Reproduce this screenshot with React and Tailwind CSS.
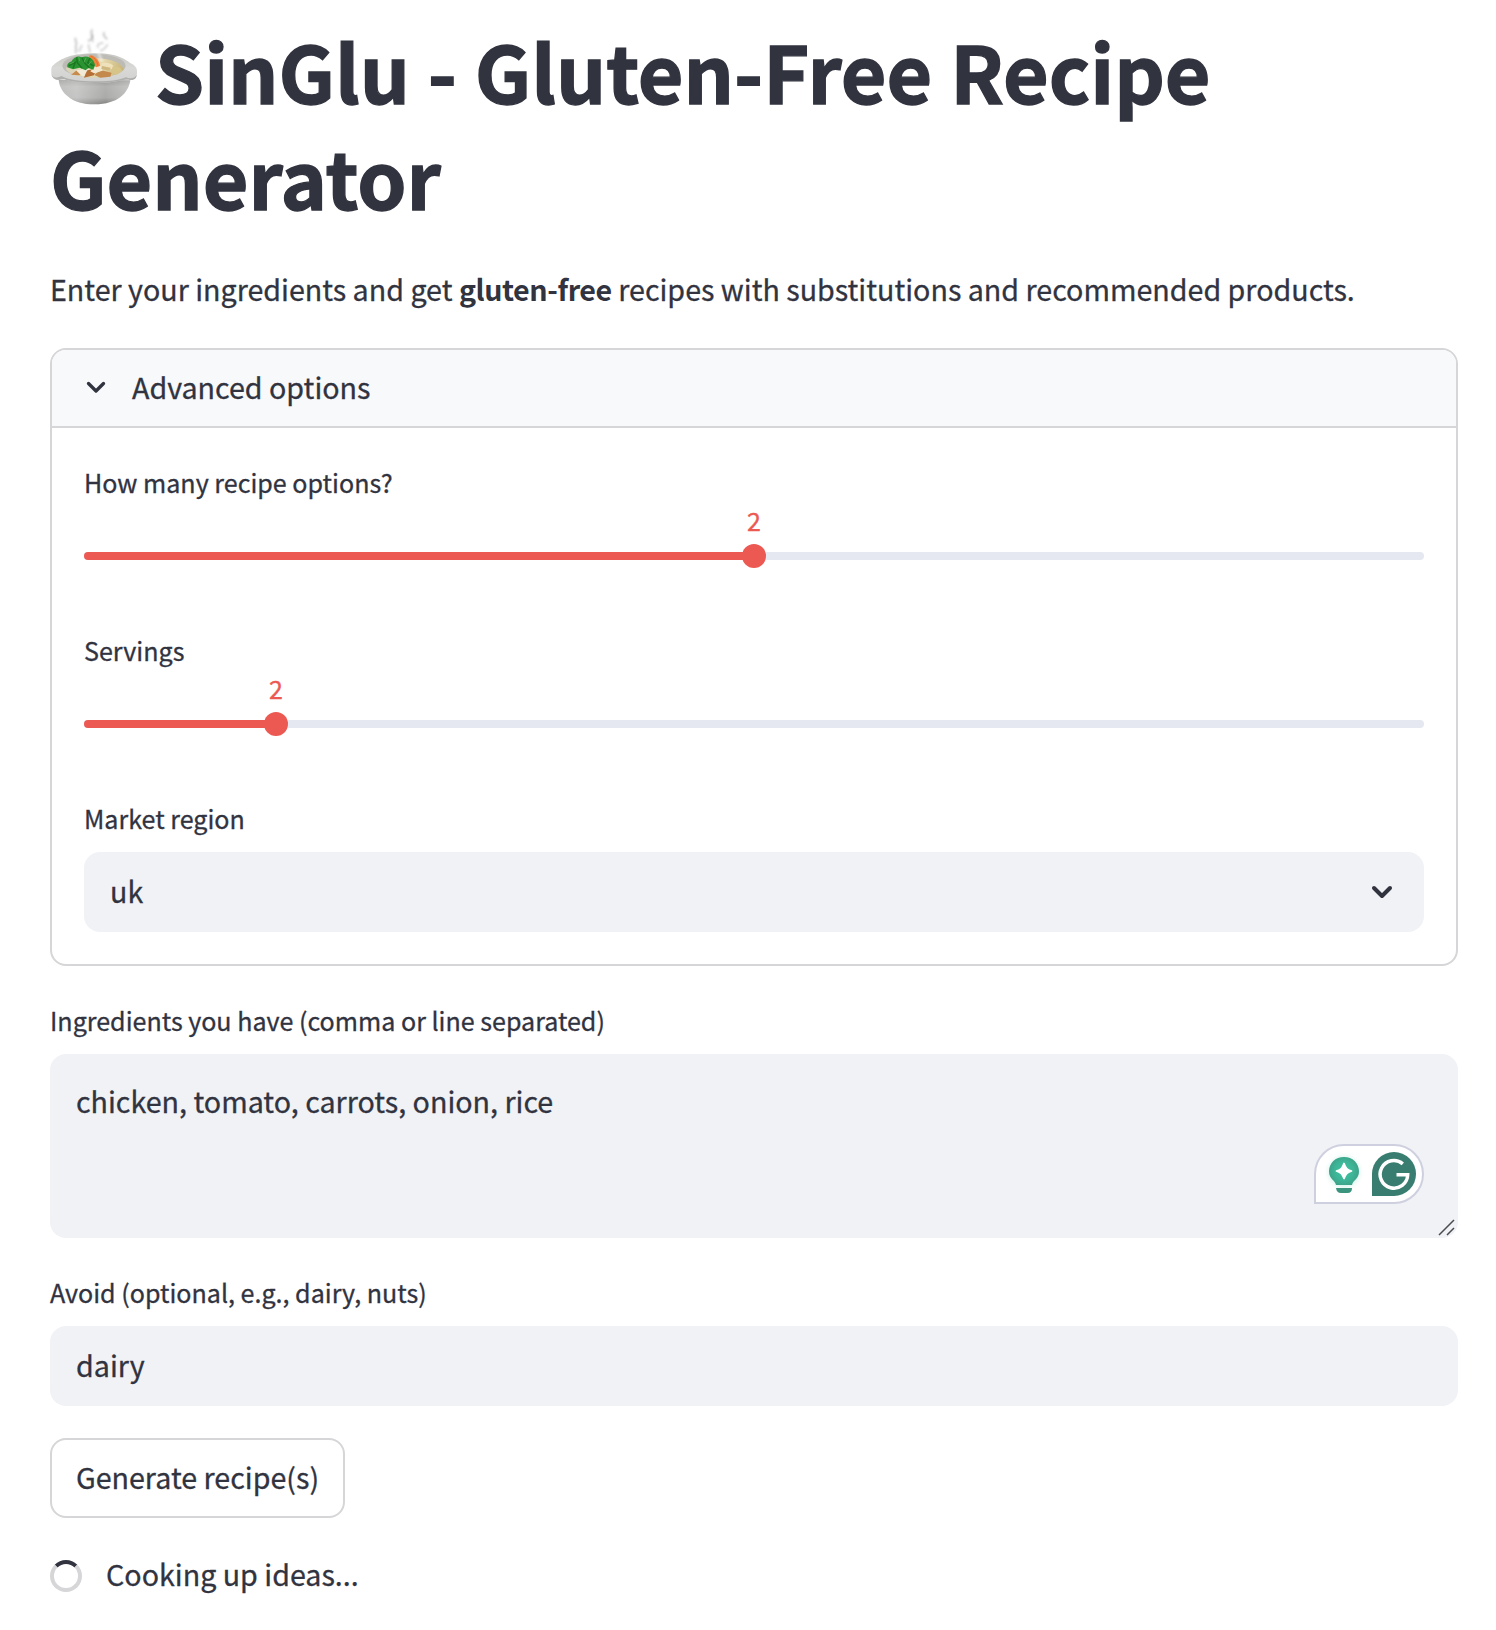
import React from "react";

function SoupBowl() {
  return (
    <svg className="mt-[10px] h-20 w-[90px] shrink-0" viewBox="30 20 270 240" fill="none">
      <defs>
        <linearGradient id="body" x1="0" y1="170" x2="0" y2="252" gradientUnits="userSpaceOnUse">
          <stop offset="0" stopColor="#858583" />
          <stop offset="0.35" stopColor="#adadac" />
          <stop offset="0.75" stopColor="#a6a6a5" />
          <stop offset="1" stopColor="#7c7c7b" />
        </linearGradient>
        <linearGradient id="side" x1="56" y1="0" x2="272" y2="0" gradientUnits="userSpaceOnUse">
          <stop offset="0" stopColor="#fff" stopOpacity="0.25" />
          <stop offset="0.25" stopColor="#fff" stopOpacity="0.35" />
          <stop offset="0.65" stopColor="#fff" stopOpacity="0.05" />
          <stop offset="1" stopColor="#fff" stopOpacity="0.3" />
        </linearGradient>
        <linearGradient id="rim" x1="0" y1="98" x2="0" y2="188" gradientUnits="userSpaceOnUse">
          <stop offset="0" stopColor="#c6c6c2" />
          <stop offset="0.5" stopColor="#d9d9d7" />
          <stop offset="1" stopColor="#d0d0cf" />
        </linearGradient>
        <linearGradient id="soup" x1="80" y1="110" x2="250" y2="170" gradientUnits="userSpaceOnUse">
          <stop offset="0" stopColor="#d9d2bb" />
          <stop offset="0.6" stopColor="#e5d8ac" />
          <stop offset="1" stopColor="#c4b071" />
        </linearGradient>
        <filter id="steam" x="90" y="15" width="130" height="110" filterUnits="userSpaceOnUse">
          <feGaussianBlur stdDeviation="3" />
        </filter>
        <filter id="soft" x="30" y="90" width="270" height="170" filterUnits="userSpaceOnUse">
          <feGaussianBlur stdDeviation="1" />
        </filter>
      </defs>
      <g filter="url(#soft)">
        <path d="M56 178C60 218 96 252 164 252S264 220 271 180Z" fill="url(#body)" />
        <path d="M56 178C60 218 96 252 164 252S264 220 271 180Z" fill="url(#side)" />
        <path d="M34 151C33 138 39 134 49 127C65 119 78 101 160 99C232 98 253 116 272 129C284 135 292 141 291 156C291 169 288 174 277 178C265 181 258 176 249 178C220 187 189 188 160 188C126 188 92 185 75 177C66 174 57 181 48 178C37 173 33 164 34 151Z" fill="url(#rim)" />
        <path d="M35 162C38 173 50 174 64 167C90 180 125 183 160 183S230 182 258 171C270 176 286 174 290 163C290 174 282 180 270 179C260 176 255 179 248 179C220 187 189 188 160 188S94 185 74 177C62 175 54 181 47 177C38 173 35 168 35 162Z" fill="#afafae" />
        <ellipse cx="162" cy="136" rx="95" ry="35" fill="#bdbbb5" />
        <path d="M77 146C90 123 115 110 168 114C216 115 244 128 251 147C239 164 204 171 163 172C120 171 89 164 77 146Z" fill="url(#soup)" />
        <path d="M101 157L110 150L124 162L118 165L93 163Z" fill="#c78b4d" />
        <path d="M108 150L139 145L158 150L137 168L126 168Z" fill="#f0ead7" />
        <path d="M142 150L158 147L166 155L162 165L132 172L136 162Z" fill="#b66f35" />
        <path d="M163 164C172 154 183 149 193 152L215 157L211 169L181 172Z" fill="#c48a4e" />
        <path d="M169 135L185 138L187 151L162 159L151 153Z" fill="#f1e8cf" />
        <path d="M185 128C201 125 217 129 222 139C218 148 198 151 183 144Z" fill="#efe1b9" />
        <path d="M186 137L212 142L208 151L184 146Z" fill="#cfb780" />
        <path d="M218 138L239 141L247 151L231 163L214 158Z" fill="#d6c489" />
        <path d="M146 106L155 105C169 110 179 124 180 137L169 141L157 132Z" fill="#f08440" />
        <path d="M152 107C164 112 172 123 174 136" stroke="#e0712f" strokeWidth="3" />
        <path d="M82 141C80 130 88 126 95 123C98 116 103 113 108 111C113 106 119 109 126 111C136 107 143 109 150 112C158 116 164 125 165 135L160 148L145 143L137 150L119 142L99 147Z" fill="#2b9430" />
        <path d="M87 136L106 126L99 144M110 111L112 127L126 143M126 112L133 127L148 142M150 113L143 127L162 137" stroke="#1b7524" strokeWidth="4" />
        <path d="M89 131L102 125M116 110L119 122M138 112L132 126M155 122L145 134" stroke="#51ae4b" strokeWidth="3" />
      </g>
      <g filter="url(#steam)" stroke="#777" strokeLinecap="round">
        <path d="M106 55C106 62 112 66 108 76C106 82 111 88 107 96M156 30C148 40 164 48 154 56L146 61M192 38C188 45 195 50 200 55" strokeWidth="7" opacity="0.33" />
        <path d="M125 76L118 92M156 44L158 63M146 74C145 84 151 88 150 95M188 68C178 68 170 74 173 82M182 91C190 90 198 80 202 74" strokeWidth="6" opacity="0.3" />
      </g>
      <path d="M163 75C178 92 177 109 187 125" stroke="#fff" strokeWidth="8" opacity="0.55" filter="url(#steam)" />
    </svg>
  );
}

function Label({ children }) {
  return <div className="h-10 whitespace-nowrap text-[25.07px] leading-10">{children}</div>;
}

function SliderField({ label, value, percent }) {
  return (
    <div className="h-[168px]">
      <Label>{label}</Label>
      <div className="relative mt-[50px] h-2 rounded-full bg-[#e5e8f0]">
        <div className="h-2 rounded-full bg-[#ec5953]" style={{ width: `${percent}%` }} />
        <div
          className="absolute -top-2 size-6 -translate-x-1/2 rounded-full bg-[#ec5953]"
          style={{ left: `${percent}%` }}
        />
        <div
          className="absolute -top-12 -translate-x-1/2 text-[25.07px] leading-8 text-[#ec5953]"
          style={{ left: `${percent}%` }}
        >
          {value}
        </div>
      </div>
    </div>
  );
}

function WritingAssistant() {
  return (
    <div className="absolute right-[34px] top-[90px] flex h-[60px] w-[110px] rounded-[30px] rounded-bl-none border-2 border-[#cfd0df] bg-white">
      <svg className="size-full" viewBox="1316 1146 106 56" fill="none">
        <defs>
          <radialGradient id="bulb" cx="1344" cy="1171" r="17" gradientUnits="userSpaceOnUse">
            <stop offset="0" stopColor="#3cc4a1" />
            <stop offset="0.55" stopColor="#3db597" />
            <stop offset="1" stopColor="#3d9c84" />
          </radialGradient>
          <filter id="glow" x="1322" y="1150" width="46" height="50" filterUnits="userSpaceOnUse">
            <feGaussianBlur stdDeviation="2.5" />
          </filter>
        </defs>
        <circle cx="1344" cy="1172" r="15" fill="#7fe0c6" opacity="0.4" filter="url(#glow)" />
        <path d="M1336 1185C1335 1180 1329 1179 1329 1171.5C1329 1163 1335.5 1157 1344 1157S1359 1163 1359 1171.5C1359 1179 1353 1180 1352 1185Z" fill="url(#bulb)" />
        <path d="M1336 1188H1352C1352 1191.500 1350.500 1193 1347.500 1193H1341C1338 1193 1336.500 1191.500 1336 1188Z" fill="#3b947e" />
        <path d="M1344 1163.500C1345.800 1168.500 1346.800 1169.500 1351.500 1171C1346.800 1172.800 1345.800 1173.800 1344 1178.500C1342.200 1173.800 1341.200 1172.800 1336.500 1171C1341.200 1169.500 1342.200 1168.500 1344 1163.500Z" fill="white" stroke="white" strokeWidth="1.800" strokeLinejoin="round" />
        <path d="M1372 1196V1174A22 22 0 1 1 1394 1196Z" fill="#387d70" />
        <path d="M1402.800 1163.800A13.800 13.800 0 1 0 1407.700 1174.700H1396.500" stroke="white" strokeWidth="3.500" />
      </svg>
    </div>
  );
}

export default function App() {
  return (
    <main className="h-[1630px] w-[1496px] overflow-hidden bg-white px-[50px] pr-[38px] pt-[17px] font-['Noto_Sans_CJK_SC','Source_Sans_Pro',sans-serif] text-[28.65px] text-[#31333f] [-webkit-text-stroke:0.3px]">
      <h1 className="h-[211px] whitespace-nowrap text-[78.8px] font-bold leading-[105.6px] [-webkit-text-stroke:1.3px]">
        <span className="flex h-[107px]">
          <SoupBowl />
          <span className="ml-[15px] pt-[1px] tracking-[-0.03px]">SinGlu - Gluten-Free Recipe</span>
        </span>
        <span className="block">Generator</span>
      </h1>
      <p className="mt-[35px] h-[52px] whitespace-nowrap leading-[52px]">
        Enter your ingredients and get <strong className="font-bold tracking-[-0.42px] [-webkit-text-stroke:0px]">gluten-free</strong> recipes with substitutions and recommended products.
      </p>

      <section className="mt-[33px] h-[618px] overflow-hidden rounded-2xl border-2 border-[#d6d6d8]">
        <header className="flex h-[78px] items-center border-b-2 border-[#d6d6d8] bg-[#f8f9fb] pl-[33px]">
          <svg className="mb-[3px] w-[24px]" viewBox="0 0 24 24" fill="none" stroke="#31333f" strokeWidth="3.300" strokeLinecap="round" strokeLinejoin="round">
            <path d="M3.500 8.500L11 16L18.500 8.500" />
          </svg>
          <span className="ml-[23px] pb-[1px]">Advanced options</span>
        </header>
        <div className="px-8 pt-[34px]">
          <SliderField label="How many recipe options?" value="2" percent={50} />
          <SliderField label="Servings" value="2" percent={14.32} />
          <Label>Market region</Label>
          <div className="mt-[14px] flex h-20 items-center justify-between rounded-2xl bg-[#f0f2f6] pl-[26px] pr-[30px]">
            <span className="pb-[1px]">uk</span>
            <svg className="size-6" viewBox="0 0 24 24" fill="none" stroke="#31333f" strokeWidth="4" strokeLinecap="round" strokeLinejoin="round">
              <path d="M4 8L12 16L20 8" />
            </svg>
          </div>
        </div>
      </section>

      <div className="mt-[34px]">
        <Label>Ingredients you have (comma or line separated)</Label>
        <div className="relative mt-[14px] h-[184px] rounded-2xl bg-[#f0f2f6] px-[26px] pt-[21px] leading-[52px]">
          chicken, tomato, carrots, onion, rice
          <WritingAssistant />
          <svg className="absolute bottom-[2px] right-[3px] size-[17px]" viewBox="0 0 17 17" stroke="#4a4b50" strokeWidth="1.5">
            <path d="M1 16L16 1M9 16L16 9" />
          </svg>
        </div>
      </div>

      <div className="mt-[34px]">
        <Label>Avoid (optional, e.g., dairy, nuts)</Label>
        <div className="mt-[14px] flex h-20 items-center rounded-2xl bg-[#f0f2f6] px-[26px] pb-[1px]">dairy</div>
      </div>

      <button className="mt-8 flex h-20 w-[295px] items-center justify-center whitespace-nowrap rounded-2xl border-2 border-[#d6d6d8] bg-white pb-[1px]">
        Generate recipe(s)
      </button>

      <div className="mt-[32px] flex h-[52px] items-center">
        <span className="size-8 rounded-full border-4 border-[#d6d6d8] border-t-[#31333f]" />
        <span className="ml-6 pb-[4px]">Cooking up ideas...</span>
      </div>
    </main>
  );
}
